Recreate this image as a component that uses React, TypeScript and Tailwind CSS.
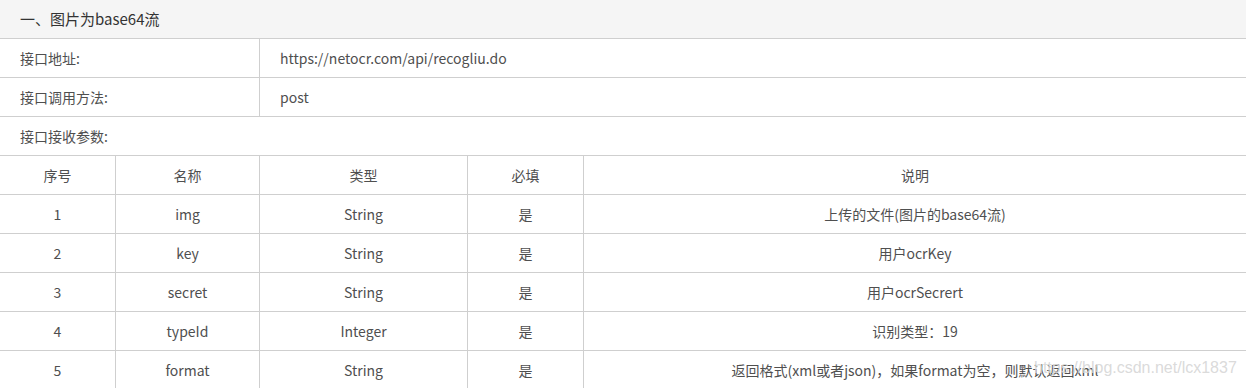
const params = [
  { no: '1', name: 'img', type: 'String', required: '是', desc: '上传的文件(图片的base64流)' },
  { no: '2', name: 'key', type: 'String', required: '是', desc: '用户ocrKey' },
  { no: '3', name: 'secret', type: 'String', required: '是', desc: '用户ocrSecrert' },
  { no: '4', name: 'typeId', type: 'Integer', required: '是', desc: '识别类型：19' },
  { no: '5', name: 'format', type: 'String', required: '是', desc: '返回格式(xml或者json)，如果format为空，则默认返回xml' },
];

const cols = 'grid grid-cols-[115px_144px_208px_116px_1fr]';

export default function App() {
  return (
    <div
      className="relative w-[1246px] bg-white text-[14px] text-[#4f4f4f]"
      style={{ fontFamily: '"Microsoft YaHei", "Noto Sans CJK SC", sans-serif' }}
    >
      {/* Title */}
      <div className="flex h-[39px] items-center border-b border-[#cfcfcf] bg-[#f5f5f5] px-5 text-[15px] text-[#333]">
        一、图片为base64流
      </div>

      {/* Address */}
      <div className={`${cols} h-[39px] border-b border-[#cfcfcf]`}>
        <div className="col-span-2 flex items-center px-5">接口地址:</div>
        <div className="col-span-3 flex items-center border-l border-[#cfcfcf] px-5">
          https://netocr.com/api/recogliu.do
        </div>
      </div>

      {/* Method */}
      <div className={`${cols} h-[39px] border-b border-[#cfcfcf]`}>
        <div className="col-span-2 flex items-center px-5">接口调用方法:</div>
        <div className="col-span-3 flex items-center border-l border-[#cfcfcf] px-5">post</div>
      </div>

      {/* Params label */}
      <div className="flex h-[39px] items-center border-b border-[#cfcfcf] px-5">接口接收参数:</div>

      {/* Params header */}
      <div className={`${cols} h-[39px] border-b border-[#cfcfcf] text-center`}>
        <div className="flex items-center justify-center">序号</div>
        <div className="flex items-center justify-center border-l border-[#cfcfcf]">名称</div>
        <div className="flex items-center justify-center border-l border-[#cfcfcf]">类型</div>
        <div className="flex items-center justify-center border-l border-[#cfcfcf]">必填</div>
        <div className="flex items-center justify-center border-l border-[#cfcfcf]">说明</div>
      </div>

      {params.map((p) => (
        <div key={p.no} className={`${cols} h-[39px] border-b border-[#cfcfcf] text-center`}>
          <div className="flex items-center justify-center">{p.no}</div>
          <div className="flex items-center justify-center border-l border-[#cfcfcf]">{p.name}</div>
          <div className="flex items-center justify-center border-l border-[#cfcfcf]">{p.type}</div>
          <div className="flex items-center justify-center border-l border-[#cfcfcf]">{p.required}</div>
          <div className="flex items-center justify-center border-l border-[#cfcfcf]">{p.desc}</div>
        </div>
      ))}

      {/* Watermark */}
      <div
        className="pointer-events-none absolute left-[1034px] top-[360px] text-[16px] leading-none text-[#d6d6d6]/90"
        style={{ fontFamily: '"Liberation Sans", Arial, sans-serif' }}
      >
        https://blog.csdn.net/lcx1837
      </div>
    </div>
  );
}
